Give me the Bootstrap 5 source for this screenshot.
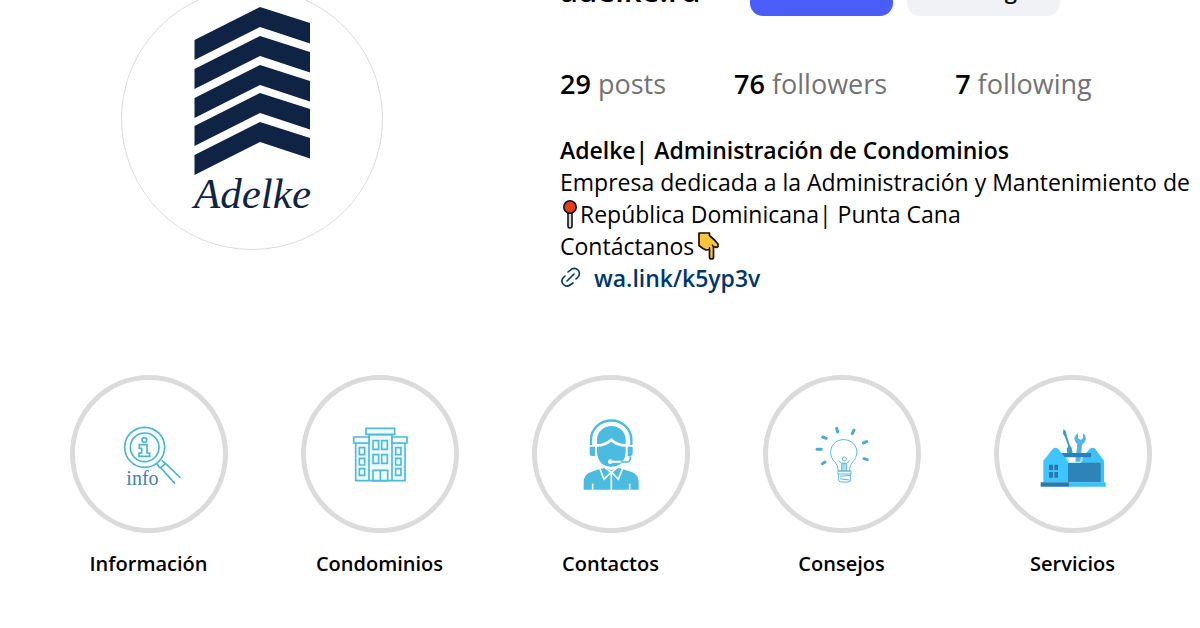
<!DOCTYPE html>
<html lang="es">
<head>
<meta charset="utf-8">
<meta name="viewport" content="width=device-width, initial-scale=1">
<title>adelke.rd</title>
<link href="https://cdn.jsdelivr.net/npm/bootstrap@5.3.0/dist/css/bootstrap.min.css" rel="stylesheet">
<style>
  body { font-family: "Open Sans", "Noto Sans", sans-serif; color: #000; background: #fff; overflow-x: hidden; }
  .profile { margin-top: -36px; }
  .profile-photo { width: 42%; padding-top: 24px; }
  .avatar { width: 262px; height: 262px; border: 1px solid #dcdcdc; }
  .profile-info { padding-left: 56px; min-width: 0; }
  .handle { width: 190px; font-size: 31px; line-height: 52px; font-weight: 600; }
  .actions { gap: 14px; }
  .action { height: 52px; border-radius: 13px; font-size: 22px; font-weight: 600; padding: 0; border: 0; }
  .action-follow { width: 143px; background: #4a5df9; color: #fff; }
  .action-message { width: 153px; background: #f0f2f5; color: #0c1014; }
  .stats { gap: 68px; margin-top: 50px; font-size: 27px; line-height: 36px; color: #737373; }
  .stats b { color: #000; font-weight: 600; }
  .bio { margin-top: 32px; font-size: 23px; line-height: 32px; }
  .bio-name { font-weight: 600; }
  .bio-link { color: #00376b; font-weight: 600; }
  .highlights { display: grid; grid-template-columns: repeat(5, 1fr); margin-top: 81px; padding: 0 12px 40px 33px; }
  .highlight { color: #000; font-size: 20px; line-height: 28px; font-weight: 600; gap: 17px; }
  .ring { width: 158px; height: 158px; border: 5px solid #dbdbdb; }
  .ring text { font-weight: 400; }
</style>
</head>
<body>
<main>
  <section class="profile d-flex">
    <div class="profile-photo d-flex justify-content-center flex-shrink-0">
      <svg class="avatar rounded-circle" viewBox="122 -11 260 260" role="img" aria-label="Adelke">
        <g fill="#0f2444">
          <path id="chevron" d="M194.500 40 260 7 310 23V43.500L260 27 194.500 60Z"/>
          <use href="#chevron" y="29"/>
          <use href="#chevron" y="58"/>
          <use href="#chevron" y="86"/>
          <use href="#chevron" y="115"/>
          <text x="194" y="208" font-family="Liberation Serif, serif" font-style="italic" font-size="43">Adelke</text>
        </g>
      </svg>
    </div>
    <div class="profile-info flex-grow-1">
      <div class="d-flex">
        <h1 class="handle mb-0">adelke.rd</h1>
        <div class="actions d-flex">
          <button type="button" class="btn action action-follow">Follow</button>
          <button type="button" class="btn action action-message">Message</button>
        </div>
      </div>
      <div class="stats d-flex text-nowrap">
        <span><b>29</b> posts</span>
        <span><b>76</b> followers</span>
        <span><b>7</b> following</span>
      </div>
      <div class="bio text-nowrap">
        <div class="bio-name">Adelke| Administración de Condominios</div>
        <div>Empresa dedicada a la Administración y Mantenimiento de</div>
        <div class="d-flex align-items-center"><svg width="20" height="30" viewBox="0 0 20 30" aria-hidden="true"><path d="M8 14h4v13a2 2 0 0 1-4 0Z" fill="#ddd" stroke="#111" stroke-width="1.600"/><circle cx="10" cy="8" r="6.200" fill="#ea3a1f" stroke="#111" stroke-width="1.600"/></svg><span>República Dominicana| Punta Cana</span></div>
        <div class="d-flex align-items-center"><span>Contáctanos</span><svg class="ms-1" width="22" height="30" viewBox="0 0 22 30" aria-hidden="true"><path d="M1 2H11.500V4.500L17 9.500 20 13V15.500L18.500 16.500 15.500 15.500V26Q15.500 28 13.500 28T11.500 26V18.500L8 19 5 17.500 1 14.500Z" fill="#fcc63c" stroke="#151000" stroke-width="1.700" stroke-linejoin="round"/><path d="M11.500 18.500V16M15.500 16 14 13.500" fill="none" stroke="#151000" stroke-width="1.300"/></svg></div>
        <a href="#" class="bio-link d-flex align-items-center text-decoration-none"><svg class="me-2" width="22" height="22" viewBox="0 0 22 22" fill="none" stroke="#00376b" stroke-width="1.600" stroke-linecap="round" aria-hidden="true"><path d="M8 5 10.500 3A5 5 0 0 1 18 10L16 12M5 9 3 11A5 5 0 0 0 10 18L13 16M7 14 14 7"/></svg><span class="ps-1">wa.link/k5yp3v</span></a>
      </div>
    </div>
  </section>

  <nav class="highlights" aria-label="Highlights">
    <a href="#" class="highlight d-flex flex-column align-items-center text-decoration-none">
      <svg class="ring rounded-circle" viewBox="43 43 444 444" aria-hidden="true">
        <g fill="none" stroke="#49b4d2" stroke-width="5">
          <circle cx="252" cy="245" r="60"/><circle cx="252" cy="245" r="43"/>
          <circle cx="251" cy="223" r="7"/>
          <path d="M236 237H259V262H267V272H235V262H243V248H236Z"/>
          <path d="M287 292 298 307M303 284 315 294M298 307 315 294M301 307 343 354M315 294 360 337"/>
        </g>
        <text x="197" y="357" font-family="Liberation Serif, serif" font-size="60" fill="#4382a8">info</text>
      </svg>
      <span>Información</span>
    </a>
    <a href="#" class="highlight d-flex flex-column align-items-center text-decoration-none">
      <svg class="ring rounded-circle" viewBox="46 43 444 444" aria-hidden="true">
        <g fill="#f0fbff" stroke="#4dbad8" stroke-width="5">
          <path d="M195 232H235V345H195ZM304 232H343V345H304ZM235 207H304V345H235Z"/>
          <path d="M189 214H235V232H189ZM304 214H349V232H304ZM226 188H312V206H226Z"/>
          <path d="M247 225H264V251H247ZM273 225H290V251H273ZM247 267H264V293H247ZM273 267H290V293H273ZM247 314H269V345H247ZM269 314H291V345H269Z"/>
          <path d="M206 246H222V267H206ZM206 278H222V298H206ZM206 309H222V329H206ZM315 246H331V267H315ZM315 278H331V298H315ZM315 309H331V329H315Z"/>
        </g>
      </svg>
      <span>Condominios</span>
    </a>
    <a href="#" class="highlight d-flex flex-column align-items-center text-decoration-none">
      <svg class="ring rounded-circle" viewBox="49 43 444 444" aria-hidden="true">
        <path d="M211 238V222A60 57 0 0 1 332 222V238" fill="none" stroke="#4bbbdf" stroke-width="7"/>
        <g fill="#4bbbdf">
          <path d="M207 243H223V271H214Q207 271 207 263ZM321 243H336V263Q336 271 328 271H321Z"/>
          <path d="M229 235V222A43 41 0 0 1 315 222V235Q290 235 272 217 254 235 229 235Z"/>
          <path d="M229 243Q254 243 272 228 290 243 315 243V262Q310 303 272 303 234 303 229 262Z"/>
          <path d="M189 372V350Q189 324 213 318L240 309 254 306 272 314 290 306 303 309 331 318Q354 325 354 350V372Z"/>
        </g>
        <g fill="none" stroke="#fff" stroke-width="5">
          <path d="M272 319V372M216 354V372M327 354V372M238 310 250 341 272 319 293 341 305 310M253 306 272 320 290 306"/>
          <path d="M269 288H315" stroke-width="6"/>
        </g>
        <path d="M300 289H322Q329 289 329 272" fill="none" stroke="#4bbbdf" stroke-width="5"/>
        <circle cx="269" cy="288" r="7" fill="#fff"/>
      </svg>
      <span>Contactos</span>
    </a>
    <a href="#" class="highlight d-flex flex-column align-items-center text-decoration-none">
      <svg class="ring rounded-circle" viewBox="52 43 444 444" aria-hidden="true">
        <g fill="none" stroke="#58b9d2" stroke-width="3" stroke-linejoin="round">
          <path d="M263 316Q263 299 252 288C237 274 236 249 249 235 265 217 294 218 309 235 323 250 321 272 307 288 297 299 297 308 297 316Z"/>
          <path d="M262 316H301V325H262ZM263 325V341Q263 349 272 349H292Q300 349 300 341V325M267 332 299 329M267 339 296 343M273 316V294L264 284M288 316V294L297 284M277 316V290M283 316V290M273 294H288"/>
          <circle cx="281" cy="280" r="6"/>
        </g>
        <g fill="none" stroke="#48acca" stroke-width="9" stroke-linecap="round">
          <path d="M258 188 261 199M310 193 305 204M216 214 227 218M199 251H212M215 294 223 289M338 232 348 228M340 279 350 282"/>
        </g>
      </svg>
      <span>Consejos</span>
    </a>
    <a href="#" class="highlight d-flex flex-column align-items-center text-decoration-none">
      <svg class="ring rounded-circle" viewBox="55 43 444 444" aria-hidden="true">
        <path d="M248 191 255 195 258 208 268 240 273 246 276 263H260L258 249 263 242 252 212 247 204Z" fill="#3a9bcb"/>
        <path d="M292 203Q282 209 281 220 283 230 290 234L284 288H300L304 237Q315 229 316 218 315 207 307 203L307 217 300 223 292 217Z" fill="#55b5df"/>
        <path d="M301 290V281L327 250Q335 242 344 250L370 285V350H301Z" fill="#3ec0f7"/>
        <path d="M240 262H331V275H240Z" fill="#2e7fb4"/>
        <path d="M260 291H360V350H260Z" fill="#2e84b9"/>
        <path d="M188 350V285L216 250Q224 242 233 250L262 285V350Z" fill="#3ec7ff"/>
        <path d="M245 262H262V275H252Z" fill="#2e7fb4"/>
        <path d="M266 350H375V363H266Z" fill="#38c0f8"/><path d="M180 350H266V363H180Z" fill="#2b79ac"/>
        <path d="M205 297H217V313H205ZM221 297H232V313H221ZM205 319H217V336H205ZM221 319H232V336H221Z" fill="#2878ac"/>
        <path d="M255 276H262L267 290H262ZM300 276H309L303 290H297Z" fill="#9bdcf8"/>
      </svg>
      <span>Servicios</span>
    </a>
  </nav>
</main>
<script src="https://cdn.jsdelivr.net/npm/bootstrap@5.3.0/dist/js/bootstrap.bundle.min.js"></script>
</body>
</html>
